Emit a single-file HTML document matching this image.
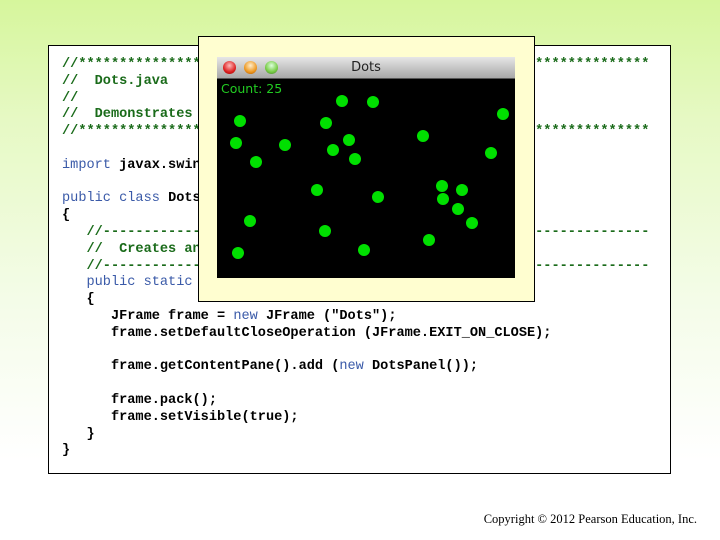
<!DOCTYPE html>
<html><head><meta charset="utf-8"><style>
html,body{margin:0;padding:0}
body{width:720px;height:540px;position:relative;overflow:hidden;background:linear-gradient(#d6f69c 0px,#e6f9c4 120px,#f4fce8 300px,#fff 460px);font-family:"Liberation Sans",sans-serif}
#code{position:absolute;left:48px;top:45px;width:621px;height:427px;border:1px solid #000;background:#fff}
pre{position:absolute;left:62px;top:57px;margin:0;font:bold 13.6px/16.8px "Liberation Mono",monospace;color:#000}
.c{color:#1a6b1a}.k{color:#3a5aa8;font-weight:normal}
#yb{position:absolute;left:198px;top:36px;width:335px;height:264px;border:1px solid #000;background:#fffed0}
#win{position:absolute;left:217px;top:57px;width:298px;height:221px;background:#000}
#tb{height:21px;background:linear-gradient(#e6e6e6,#a8a8a8);border-bottom:1px solid #555;position:relative;font:13px "DejaVu Sans",sans-serif;color:#222;text-align:center;line-height:21px}
.b{position:absolute;top:4px;width:13px;height:13px;border-radius:50%}
#cnt{position:absolute;left:4px;top:24px;color:#22cc22;font:12.5px "DejaVu Sans",sans-serif}
#copy{position:absolute;right:23px;top:512px;font:12.5px "Liberation Serif",serif;color:#000}
</style></head><body>
<div id="code"></div>
<pre><span class="c">//**********************************************************************
//  Dots.java
//
//  Demonstrates
//**********************************************************************</span>

<span class="k">import</span> javax.swing.JFrame;

<span class="k">public class</span> Dots
{
   <span class="c">//-------------------------------------------------------------------
   //  Creates and displays the application frame.
   //-------------------------------------------------------------------</span>
   <span class="k">public static</span> void main (String[] args)
   {
      JFrame frame = <span class="k">new</span> JFrame ("Dots");
      frame.setDefaultCloseOperation (JFrame.EXIT_ON_CLOSE);

      frame.getContentPane().add (<span class="k">new</span> DotsPanel());

      frame.pack();
      frame.setVisible(true);
   }
}</pre>
<div id="yb"></div>
<div id="win">
<div id="tb">Dots
<div class="b" style="left:6px;background:radial-gradient(circle at 50% 35%,#fbb,#d22 60%,#900)"></div>
<div class="b" style="left:27px;background:radial-gradient(circle at 50% 35%,#fec,#e92 60%,#a50)"></div>
<div class="b" style="left:48px;background:radial-gradient(circle at 50% 35%,#dfd,#7c4 60%,#473)"></div>
</div>
<div id="cnt">Count: 25</div>
</div>
<svg style="position:absolute;left:0;top:0" width="720" height="540"><g fill="#00e000">
<circle cx="342" cy="101" r="6"/><circle cx="373" cy="102" r="6"/><circle cx="503" cy="114" r="6"/><circle cx="240" cy="121" r="6"/><circle cx="326" cy="123" r="6"/><circle cx="236" cy="143" r="6"/><circle cx="285" cy="145" r="6"/><circle cx="349" cy="140" r="6"/><circle cx="333" cy="150" r="6"/><circle cx="423" cy="136" r="6"/><circle cx="256" cy="162" r="6"/><circle cx="355" cy="159" r="6"/><circle cx="491" cy="153" r="6"/><circle cx="317" cy="190" r="6"/><circle cx="378" cy="197" r="6"/><circle cx="442" cy="186" r="6"/><circle cx="462" cy="190" r="6"/><circle cx="443" cy="199" r="6"/><circle cx="458" cy="209" r="6"/><circle cx="472" cy="223" r="6"/><circle cx="250" cy="221" r="6"/><circle cx="325" cy="231" r="6"/><circle cx="429" cy="240" r="6"/><circle cx="364" cy="250" r="6"/><circle cx="238" cy="253" r="6"/>
</g></svg>
<div id="copy">Copyright © 2012 Pearson Education, Inc.</div>
</body></html>
